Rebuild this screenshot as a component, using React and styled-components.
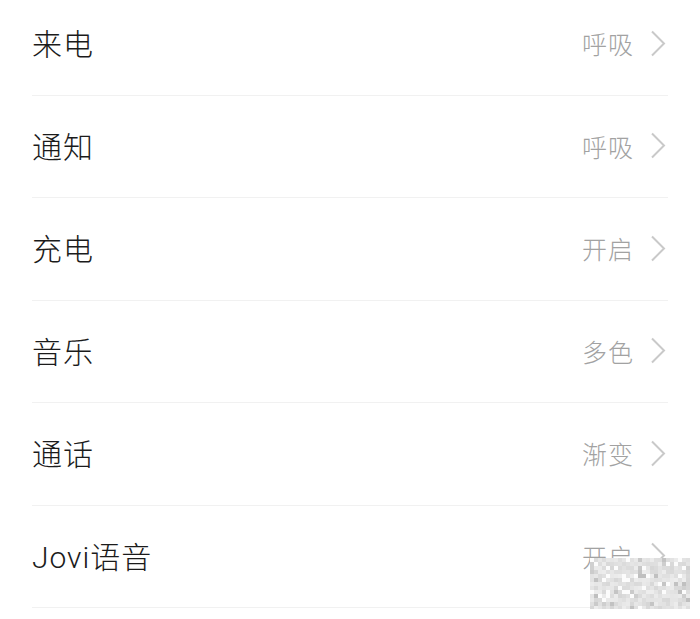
import React from 'react';
import styled, { createGlobalStyle } from 'styled-components';

const GlobalStyle = createGlobalStyle`
  html, body {
    margin: 0;
    padding: 0;
    background: #ffffff;
    overflow: hidden;
  }
  body {
    font-family: Roboto, "Noto Sans CJK SC", sans-serif;
  }
`;

const Page = styled.div`
  width: 700px;
  height: 619px;
  overflow: hidden;
  position: relative;
  background: #fff;
`;

const List = styled.ul`
  list-style: none;
  margin: -7px 0 0;
  padding: 0 32px;
`;

const Row = styled.li`
  display: flex;
  align-items: center;
  justify-content: space-between;
  height: 102.5px;
  box-sizing: border-box;
  border-bottom: 1px solid #f1f1f1;
`;

const Label = styled.span`
  font-size: 30px;
  font-weight: 300;
  color: #1b1b1b;
  letter-spacing: 1px;
  margin-top: -3px;
`;

const Right = styled.div`
  display: flex;
  align-items: center;
  gap: 16px;
  margin-right: 2px;
  margin-top: -1px;
`;

const Value = styled.span`
  font-size: 25px;
  font-weight: 300;
  color: #a2a2a2;
  letter-spacing: 1px;
`;

const Mosaic = styled.svg`
  position: absolute;
  left: 590px;
  top: 558px;
  width: 100px;
  height: 51px;
`;

const Chevron = () => (
  <svg width="16" height="27" viewBox="0 0 16 27" fill="none">
    <path d="M2 1.5 L14 13.5 L2 25.5" stroke="#c9c9c9" strokeWidth="2" />
  </svg>
);

const items = [
  ['来电', '呼吸'],
  ['通知', '呼吸'],
  ['充电', '开启'],
  ['音乐', '多色'],
  ['通话', '渐变'],
  ['Jovi语音', '开启'],
];

function mosaicCells() {
  let seed = 7;
  const rnd = () => {
    seed = (seed * 16807) % 2147483647;
    return seed / 2147483647;
  };
  const cells = [];
  for (let y = 0; y < 51; y += 4) {
    for (let x = 0; x < 100; x += 4) {
      const r = rnd();
      let v;
      if (r < 0.08) v = 252;
      else if (r < 0.2) v = 190 + Math.floor(rnd() * 20);
      else v = 214 + Math.floor(rnd() * 24);
      cells.push({ x, y, c: `rgb(${v},${v},${v})` });
    }
  }
  return cells;
}

const cells = mosaicCells();

export default function App() {
  return (
    <Page>
      <GlobalStyle />
      <List>
        {items.map(([label, value]) => (
          <Row key={label}>
            <Label>{label}</Label>
            <Right>
              <Value>{value}</Value>
              <Chevron />
            </Right>
          </Row>
        ))}
      </List>
      <Mosaic viewBox="0 0 100 51">
        {cells.map((c, i) => (
          <rect key={i} x={c.x} y={c.y} width="4" height="4" fill={c.c} />
        ))}
      </Mosaic>
    </Page>
  );
}
